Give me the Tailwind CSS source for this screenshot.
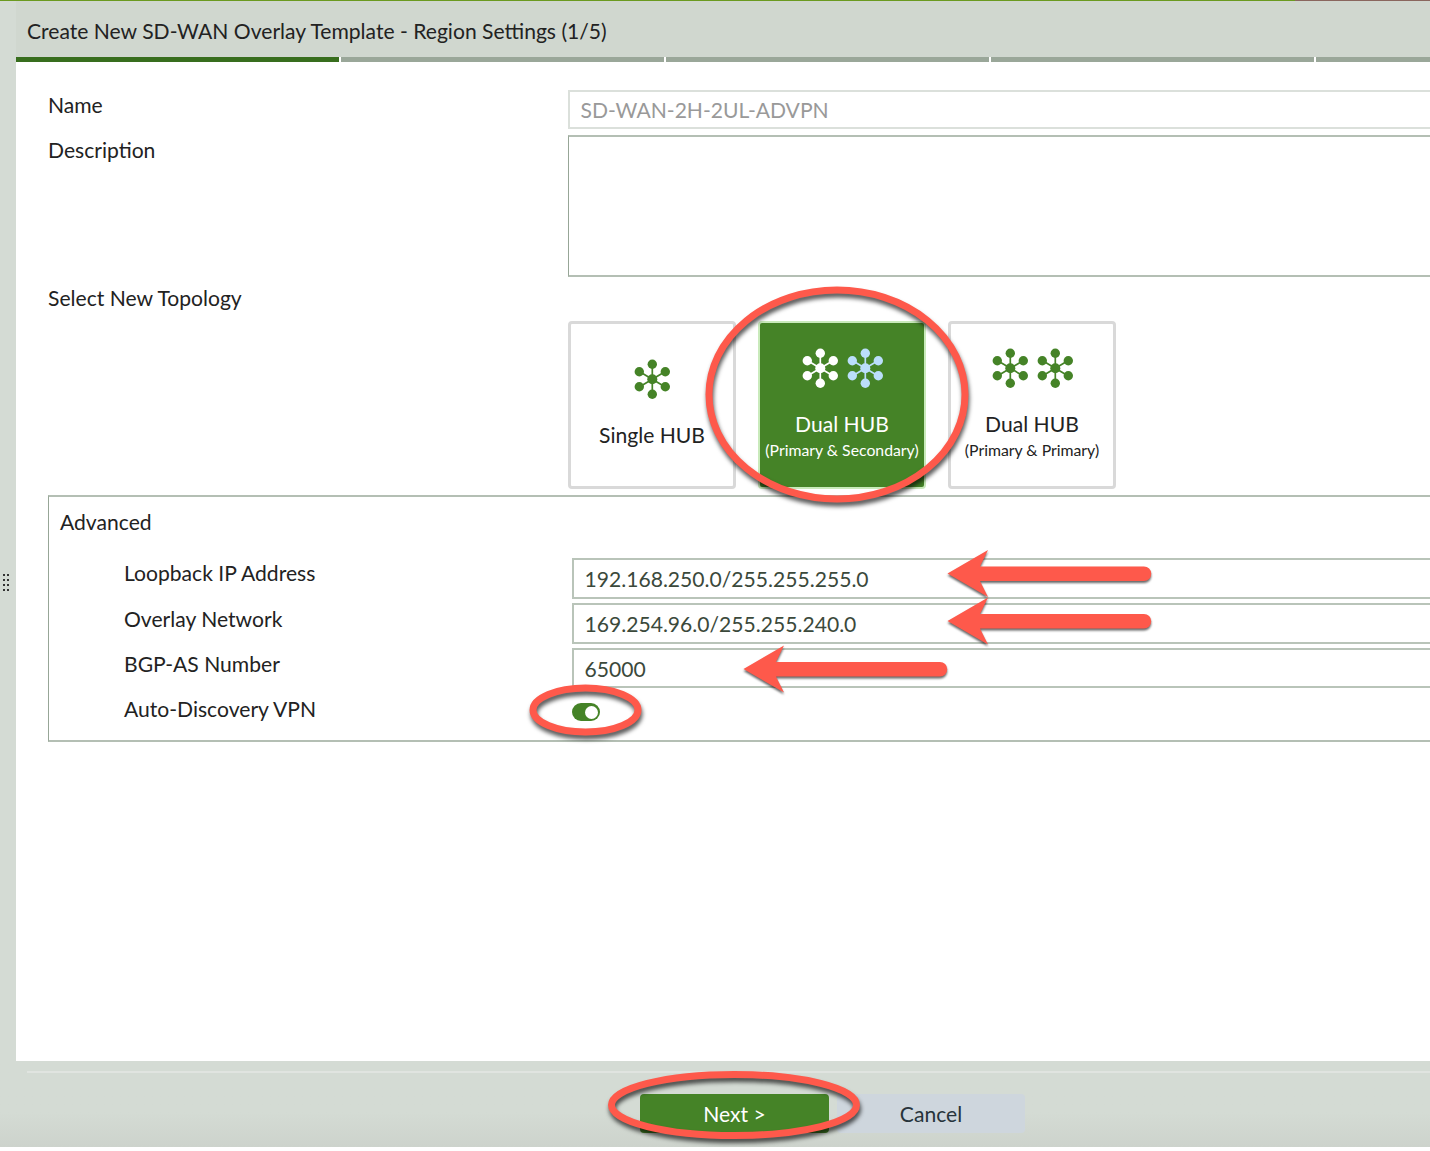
<!DOCTYPE html>
<html lang="en">
<head>
<meta charset="utf-8">
<title>Create New SD-WAN Overlay Template</title>
<script src="https://cdn.jsdelivr.net/npm/@tailwindcss/browser@4"></script>
</head>
<body class="relative flex h-[1151px] w-[1430px] flex-col overflow-hidden bg-white font-['Lato',sans-serif] text-[21.100px] leading-[28px] text-[#222]">
<svg width="0" height="0" class="absolute">
  <defs>
    <symbol id="hub" viewBox="0 0 36 40">
      <g stroke="currentColor" stroke-width="1.700"><path d="M18.300 5.300v30M5.300 12.600l26 15.400M31.300 12.600L5.300 28"/></g>
      <g fill="currentColor"><circle cx="18.300" cy="20.300" r="5"/><circle cx="18.300" cy="5.300" r="4.700"/><circle cx="18.300" cy="35.300" r="4.700"/><circle cx="5.300" cy="12.800" r="4.700"/><circle cx="31.300" cy="12.800" r="4.700"/><circle cx="5.300" cy="27.800" r="4.700"/><circle cx="31.300" cy="27.800" r="4.700"/></g>
    </symbol>
  </defs>
</svg>
<div class="flex h-px shrink-0"><div class="w-[1295px] bg-[#6b9a20]"></div><div class="flex-1 bg-[#8a665e]"></div></div>
<div class="flex h-[1060px] shrink-0">
  <aside class="flex w-4 items-center bg-[#d4dbd4]">
    <svg class="mt-[102px] ml-[3px]" width="6" height="17" fill="#333"><path d="M0 0h2v2H0zM4 0h2v2H4zM0 5h2v2H0zM4 5h2v2H4zM0 10h2v2H0zM4 10h2v2H4zM0 15h2v2H0zM4 15h2v2H4z"/></svg>
  </aside>
  <main class="flex flex-1 flex-col overflow-hidden">
    <header class="flex h-14 shrink-0 items-center bg-[#d0d7cf] pt-[3px] pl-[11px]"><h1>Create New SD-WAN Overlay Template - Region Settings (1/5)</h1></header>
    <div class="flex h-[5px] w-[1623px] shrink-0 gap-[1.500px]">
      <div class="flex-1 bg-[#386e1e]"></div><div class="flex-1 bg-[#9aa799]"></div><div class="flex-1 bg-[#9aa799]"></div><div class="flex-1 bg-[#9aa799]"></div><div class="flex-1 bg-[#9aa799]"></div>
    </div>
    <div class="flex flex-col pt-[28px] pl-8">
      <div class="flex h-[45px]"><label class="w-[520px] pt-[1px]">Name</label><div class="flex h-[39px] flex-1 items-center border-2 border-r-0 border-[#dbe0db] pl-[10.500px] pt-px text-[#999]">SD-WAN-2H-2UL-ADVPN</div></div>
      <div class="flex h-[149px]"><label class="w-[520px] pt-[1px]">Description</label><div class="h-[142px] flex-1 border-2 border-r-0 border-l border-[#b4bfb4] border-l-[#97a697]"></div></div>
      <div class="flex h-[211px]">
        <label class="w-[520px]">Select New Topology</label>
        <div class="flex gap-[22px] pt-[37px]">
          <div class="flex size-[168px] flex-col items-center rounded border-[3px] border-[#d9d9d9] pt-[35px]"><svg class="h-10 w-9 text-[#458327]"><use href="#hub"/></svg><span class="mt-[23px] leading-[26px]">Single HUB</span></div>
          <div class="flex size-[168px] flex-col items-center rounded border-[2.500px] border-[#c9eabb] bg-[#458327] pt-[25px] text-white"><div class="flex gap-[9px]"><svg class="h-10 w-9"><use href="#hub"/></svg><svg class="h-10 w-9 text-[#bbdefb]"><use href="#hub"/></svg></div><span class="mt-[23px] leading-[26px]">Dual HUB</span><span class="pt-px text-[15.800px] leading-[24px] whitespace-nowrap">(Primary &amp; Secondary)</span></div>
          <div class="flex size-[168px] flex-col items-center rounded border-[3px] border-[#d9d9d9] pt-[24px]"><div class="flex gap-[9px] text-[#458327]"><svg class="h-10 w-9"><use href="#hub"/></svg><svg class="h-10 w-9"><use href="#hub"/></svg></div><span class="mt-[23px] leading-[26px]">Dual HUB</span><span class="pt-px text-[15.800px] leading-[24px] whitespace-nowrap">(Primary &amp; Primary)</span></div>
        </div>
      </div>
      <section class="flex h-[247px] flex-col border-2 border-r-0 border-l border-[#b4bfb4] border-l-[#97a697]">
        <h2 class="h-[61px] pt-[11px] pl-[11px]">Advanced</h2>
        <div class="flex h-[45px] pl-[75px]"><label class="w-[448px] pt-[1px]">Loopback IP Address</label><div class="flex h-[41px] flex-1 items-center border-2 border-r-0 border-[#b9c4b9] pl-[10.500px] pt-px text-[#3b493b]">192.168.250.0/255.255.255.0</div></div>
        <div class="flex h-[45px] pl-[75px]"><label class="w-[448px] pt-[2px]">Overlay Network</label><div class="flex h-[41px] flex-1 items-center border-2 border-r-0 border-[#b9c4b9] pl-[10.500px] pt-px text-[#3b493b]">169.254.96.0/255.255.240.0</div></div>
        <div class="flex h-[45px] pl-[75px]"><label class="w-[448px] pt-[2px]">BGP-AS Number</label><div class="flex h-[40px] flex-1 items-center border-2 border-r-0 border-[#b9c4b9] pl-[10.500px] pt-[2px] text-[#3b493b]">65000</div></div>
        <div class="flex h-[45px] pl-[75px]"><label class="w-[448px] pt-[2px]">Auto-Discovery VPN</label><div class="mt-[10px] flex h-[18px] w-7 items-center justify-end rounded-full bg-[#458327] pr-[2px]"><i class="size-[13px] rounded-full bg-white"></i></div></div>
      </section>
    </div>
  </main>
</div>
<footer class="flex h-[86px] shrink-0 flex-col bg-linear-to-b from-[#d4dbd4] from-60% to-[#cdd3cc] pt-[10px]">
  <div class="ml-[27px] h-[2px] bg-[#e0e4e0]"></div>
  <div class="flex gap-2 pt-[21px] pl-[640px]"><button class="h-[39px] w-[189px] rounded bg-[#458327] text-white">Next &gt;</button><button class="h-[39px] w-[188px] rounded bg-[#ced6dd] text-[#27343b]">Cancel</button></div>
</footer>
<!-- Callout annotations drawn over the dialog -->
<svg class="absolute inset-0 drop-shadow-[1px_4px_2px_rgba(0,0,0,0.65)]" width="1430" height="1151" fill="none" stroke="#fe594b" stroke-width="7">
  <ellipse cx="837" cy="394.500" rx="128" ry="104.500"/>
  <ellipse cx="585.500" cy="710" rx="52.500" ry="22"/>
  <ellipse cx="734" cy="1105" rx="122.500" ry="30.500"/>
</svg>
<svg class="absolute inset-0 drop-shadow-[0_2px_1px_rgba(0,0,0,0.6)]" width="1430" height="1151" fill="#fe594b">
  <path id="arrow" d="M947.500 573.500L988 550l-8 16.500H1144a7.250 7.250 0 0 1 0 14.500H980L988 597Z"/>
  <use href="#arrow" y="47.500"/><use href="#arrow" x="-204" y="95.500"/>
</svg>
</body>
</html>
